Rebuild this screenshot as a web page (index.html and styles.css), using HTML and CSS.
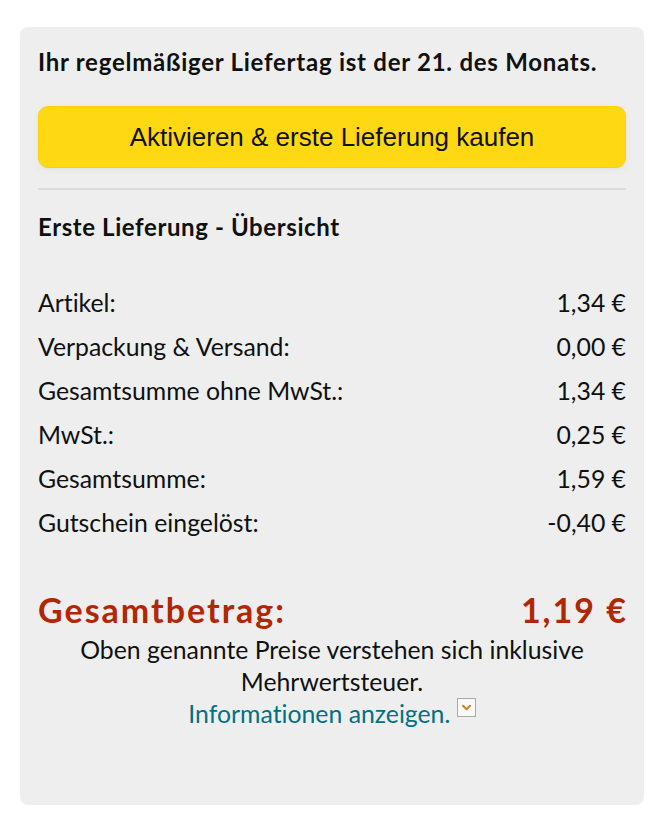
FILE: index.html
```html
<!DOCTYPE html>
<html lang="de">
<head>
<meta charset="utf-8">
<title>Lieferung</title>
<link rel="stylesheet" href="styles.css">
</head>
<body>
<div class="page">
  <div class="panel">
    <h2 class="title">Ihr regelmäßiger Liefertag ist der 21. des Monats.</h2>
    <button class="buy">Aktivieren &amp; erste Lieferung kaufen</button>
    <div class="divider"></div>
    <h3 class="subtitle">Erste Lieferung - Übersicht</h3>
    <div class="rows">
      <div class="row"><span>Artikel:</span><span>1,34 €</span></div>
      <div class="row"><span>Verpackung &amp; Versand:</span><span>0,00 €</span></div>
      <div class="row"><span>Gesamtsumme ohne MwSt.:</span><span>1,34 €</span></div>
      <div class="row"><span>MwSt.:</span><span>0,25 €</span></div>
      <div class="row"><span>Gesamtsumme:</span><span>1,59 €</span></div>
      <div class="row"><span>Gutschein eingelöst:</span><span>-0,40 €</span></div>
    </div>
    <div class="total"><span>Gesamtbetrag:</span><span class="amount">1,19 €</span></div>
    <p class="note">Oben genannte Preise verstehen sich inklusive Mehrwertsteuer.<br><a class="info" href="#">Informationen anzeigen.</a> <span class="toggle"><svg width="13" height="13" viewBox="0 0 13 13"><path d="M3 4.8 L6.5 8.2 L10 4.8" fill="none" stroke="#c88a26" stroke-width="2.2" stroke-linecap="round" stroke-linejoin="round"/></svg></span></p>
  </div>
</div>
</body>
</html>
```

FILE: styles.css
```css
html, body {
  margin: 0;
  padding: 0;
  background: #ffffff;
}
.page {
  padding: 27px 20px 17px 20px;
}
.panel {
  background: #eeeeee;
  border-radius: 8px;
  padding: 20px 18px 75px 18px;
  font-family: Lato, "Liberation Sans", sans-serif;
  font-variant-ligatures: none;
  color: #0f1111;
}
.title {
  margin: 0;
  font-size: 24px;
  line-height: 30px;
  font-weight: 700;
  letter-spacing: 0.75px;
}
.buy {
  display: block;
  width: 100%;
  height: 62px;
  margin-top: 29px;
  background: #ffd814;
  border: 1px solid #fcd200;
  border-radius: 10px;
  font-family: "Liberation Sans", Arial, sans-serif;
  font-size: 26px;
  color: #0f1111;
  padding: 0;
  box-shadow: 0 2px 5px rgba(213, 217, 217, 0.5);
}
.divider {
  height: 2px;
  background: #dcdcdc;
  margin-top: 20px;
}
.subtitle {
  margin: 22px 0 0 0;
  font-size: 24px;
  line-height: 30px;
  font-weight: 700;
  letter-spacing: 0.6px;
}
.rows {
  margin-top: 39px;
}
.row {
  display: flex;
  justify-content: space-between;
  font-size: 24.8px;
  line-height: 44px;
}
.total {
  display: flex;
  justify-content: space-between;
  margin-top: 45px;
  font-size: 34px;
  line-height: 40px;
  font-weight: 700;
  letter-spacing: 2px;
  color: #b12704;
}
.amount {
  margin-right: -2px;
}
.note {
  margin: 4px 0 0 0;
  text-align: center;
  font-size: 24.8px;
  line-height: 32px;
}
.info {
  color: #007185;
  text-decoration: none;
}
.toggle {
  display: inline-flex;
  align-items: center;
  justify-content: center;
  width: 19px;
  height: 19px;
  border: 1px solid #a9a9a9;
  background: #f8f8f8;
  vertical-align: 9px;
  box-sizing: border-box;
}
```
